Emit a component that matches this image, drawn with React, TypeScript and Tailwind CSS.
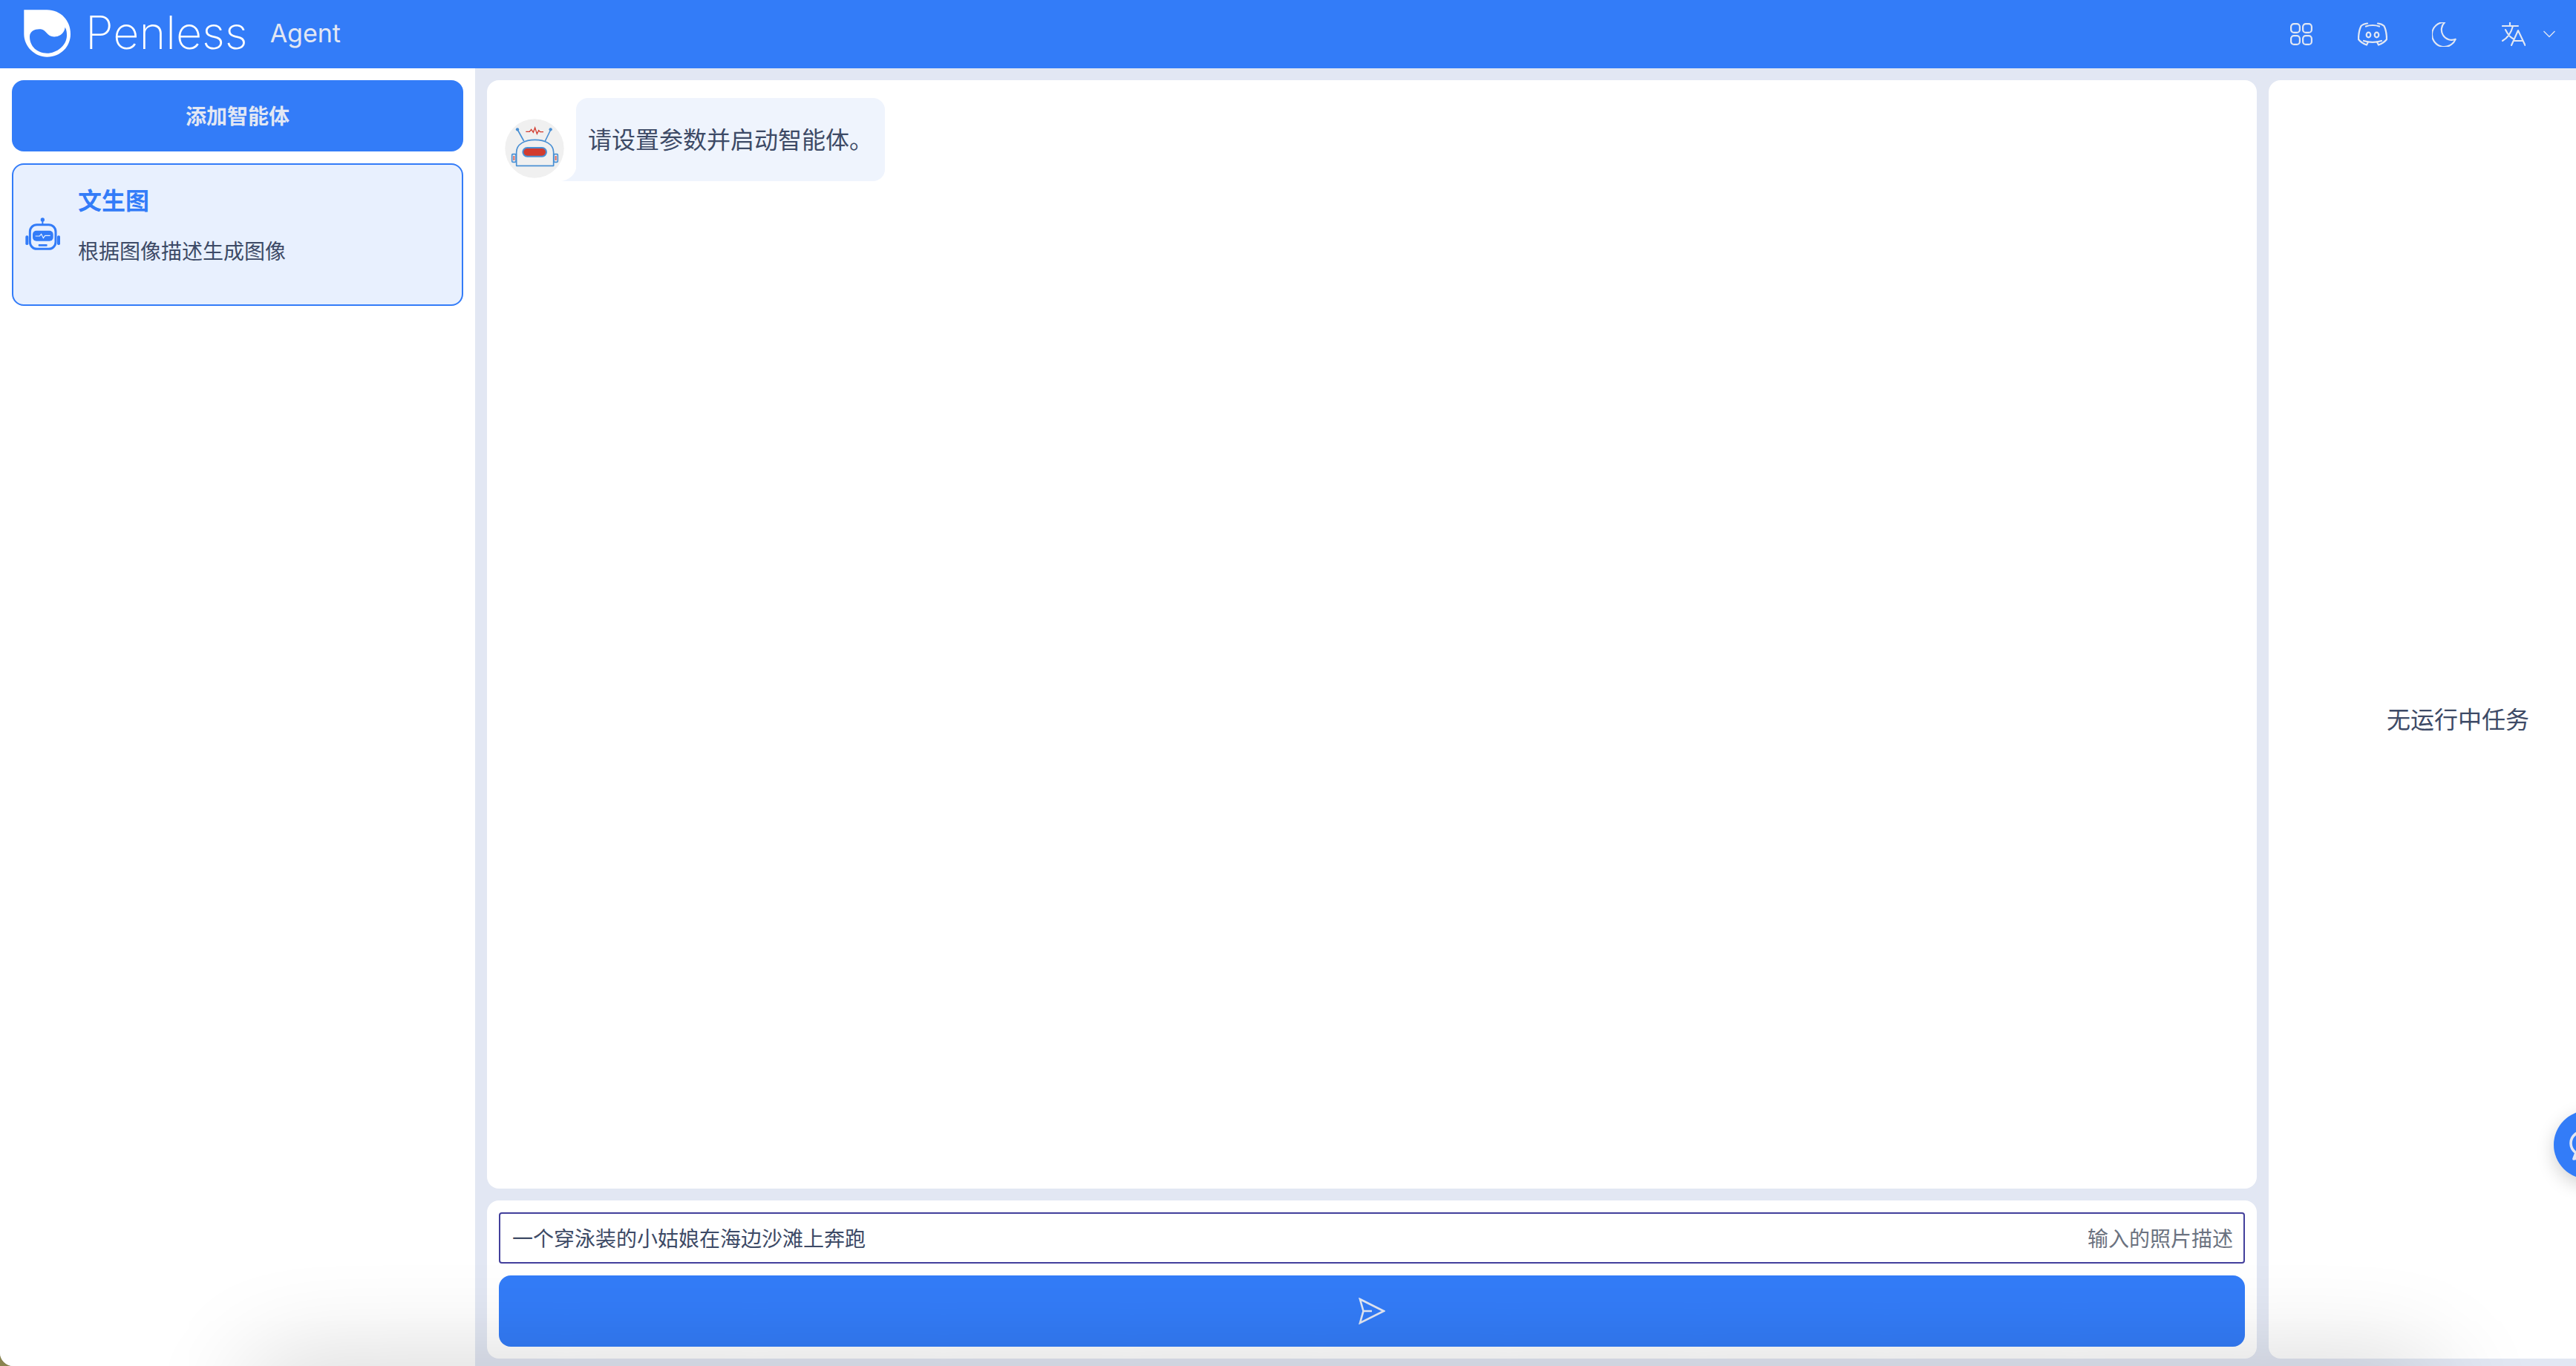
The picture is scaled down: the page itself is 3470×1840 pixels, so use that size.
export default function App() {
  const font = "[font-family:Inter,'Noto_Sans_CJK_SC',sans-serif]";
  return (
    <div className={`relative w-[3470px] h-[1840px] overflow-hidden bg-[#8a8450] ${font}`}>
      <div className="flex flex-col h-full overflow-hidden rounded-bl-[18px] bg-[#e2e7f3]">
        <header className="flex items-center h-[92px] shrink-0 bg-[#337cf8] text-[#e2e7f3]">
          <svg viewBox="0 0 240 240" className="ml-[25px] w-[80px] h-[80px] shrink-0">
            <path d="M22 22H115C170 22 210 65 210 120C210 170 170 212 115 212C65 212 22 170 22 120Z" fill="#fff" />
            <path d="M45 130C45 105 70 98 90 100C115 103 115 135 150 130C170 127 185 115 188 92C195 105 195 115 195 125C195 165 155 197 115 197C75 197 45 170 45 130Z" fill="#337cf8" />
          </svg>
          <span className="ml-[10px] mb-[3px] text-[61px] leading-none font-extralight text-white">Penless</span>
          <span className="ml-[30px] mb-[3px] text-[34px] leading-none">Agent</span>
          <div className="ml-auto mr-[28px] flex items-center">
            <svg viewBox="0 0 30 30" className="w-[30px] h-[30px]" fill="none" stroke="currentColor" strokeWidth="2.2">
              <rect x="1.1" y="1.1" width="11.8" height="11.8" rx="4" />
              <rect x="17.1" y="1.1" width="11.8" height="11.8" rx="4" />
              <rect x="1.1" y="17.1" width="11.8" height="11.8" rx="4" />
              <rect x="17.1" y="17.1" width="11.8" height="11.8" rx="4" />
            </svg>
            <svg viewBox="0 0 40 32" className="ml-[61px] w-[40px] h-[32px]" fill="none" stroke="currentColor" strokeWidth="2.2" strokeLinecap="round" strokeLinejoin="round">
              <path d="M13 1.5C9 2 6 3.5 4.5 5C2 10 1 16 1 23C4 27 8 29 12 30.5L14 26.5" />
              <path d="M27 1.5C31 2 34 3.5 35.5 5C38 10 39 16 39 23C36 27 32 29 28 30.5L26 26.5" />
              <path d="M11 5.5C16 3.5 24 3.5 29 5.5" />
              <path d="M8 25C15 27.5 25 27.5 32 25" />
              <ellipse cx="14.5" cy="17" rx="2.8" ry="3.4" />
              <ellipse cx="25.5" cy="17" rx="2.8" ry="3.4" />
            </svg>
            <svg viewBox="3 3 18 18" className="ml-[60px] w-[33px] h-[33px]" fill="none" stroke="currentColor" strokeWidth="1.15" strokeLinejoin="round">
              <path d="M12 3c.132 0 .263 0 .393 0a7.5 7.5 0 0 0 7.92 12.446a9 9 0 1 1 -8.313 -12.454z" />
            </svg>
            <svg viewBox="0 0 32 32" className="ml-[61px] w-[32px] h-[32px]" fill="none" stroke="currentColor" strokeWidth="2.1" strokeLinecap="round" strokeLinejoin="round">
              <path d="M1 5H22M11 0.5V5M15 5C13 13 8 21 1 25M5 10C8 16 11 20 15 22M13 31L22 11L31.5 31M17 25H28" />
            </svg>
            <svg viewBox="0 0 16 10" className="ml-[24px] w-[16px] h-[10px]" fill="none" stroke="currentColor" strokeWidth="1.3">
              <path d="M0.5 1L8 8.5L15.5 1" />
            </svg>
          </div>
        </header>

        <div className="flex flex-1 min-h-0 gap-4">
          <aside className="flex flex-col gap-4 w-[640px] shrink-0 p-4 bg-white">
            <button className="flex items-center justify-center h-[96px] pt-[2px] rounded-2xl bg-[#337cf8] text-[28px] font-semibold text-[#e2e7f3]">
              添加智能体
            </button>
            <div className="flex items-center h-[192px] pl-[16px] rounded-2xl border-2 border-[#337cf8] bg-[#e8f0fe]">
              <svg viewBox="0 0 195 180" className="w-[65px] h-[60px] ml-[-9px] shrink-0">
                <circle cx="97" cy="30" r="8" fill="#337cf8" />
                <path d="M97 30V48" stroke="#337cf8" strokeWidth="6" />
                <rect x="46" y="50" width="104" height="98" rx="28" fill="none" stroke="#337cf8" strokeWidth="9" />
                <rect x="57" y="74" width="83" height="42" rx="15" fill="#337cf8" />
                <path d="M68 96H85L92 88L100 104L107 94H128" fill="none" stroke="#e8f0fe" strokeWidth="3.5" />
                <rect x="80" y="129" width="36" height="8" rx="3" fill="#337cf8" />
                <rect x="28" y="94" width="12" height="38" rx="5" fill="#337cf8" />
                <rect x="156" y="94" width="12" height="38" rx="5" fill="#337cf8" />
              </svg>
              <div className="ml-[15px] flex flex-col gap-[20px] pb-[22px]">
                <span className="text-[32px] leading-[48px] font-semibold text-[#337cf8]">文生图</span>
                <span className="text-[28px] leading-[48px] text-[#3d4a66]">根据图像描述生成图像</span>
              </div>
            </div>
          </aside>

          <main className="flex flex-col gap-4 w-[2384px] shrink-0 pt-4 pb-[10px]">
            <section className="flex-1 rounded-2xl bg-white pt-[24px] pl-[25px]">
              <div className="flex items-end">
                <svg viewBox="0 0 270 270" className="relative z-10 w-[90px] h-[90px] ml-[-6px] mb-[-1px] shrink-0">
                  <circle cx="135" cy="135" r="119" fill="#f0f0f0" />
                  <g fill="none" stroke="#4a90d4" strokeWidth="5">
                    <path d="M92 105L67 60M178 105L200 60" />
                    <path d="M62 205V150C62 118 95 100 137 100C178 100 212 118 212 150V205Z" strokeLinejoin="round" />
                    <rect x="44" y="158" width="16" height="32" rx="3" />
                    <rect x="213" y="158" width="16" height="32" rx="3" />
                  </g>
                  <circle cx="66" cy="58" r="6.5" fill="#4a90d4" />
                  <circle cx="200" cy="58" r="6.5" fill="#4a90d4" />
                  <path d="M100 67H115L122 58L130 70L137 51L145 76L152 62L158 68H171" fill="none" stroke="#d23b2e" strokeWidth="4" />
                  <rect x="88" y="132" width="95" height="35" rx="17.5" fill="#d23b2e" stroke="#4a90d4" strokeWidth="6" />
                  <rect x="49" y="165" width="6" height="18" fill="#d9695e" />
                  <rect x="218" y="165" width="6" height="18" fill="#d9695e" />
                </svg>
                <div className="relative flex items-center w-[416px] h-[112px] ml-[11px] pl-[16px] pt-[2px] rounded-2xl rounded-bl-none bg-[#eff4fd] text-[32px] text-[#3d4a66]">
                  <svg viewBox="0 0 24 24" className="absolute left-[-23px] bottom-0 w-[24px] h-[24px]">
                    <path d="M24 0V24H0C14 24 24 14 24 0Z" fill="#eff4fd" />
                  </svg>
                  请设置参数并启动智能体。
                </div>
              </div>
            </section>
            <section className="flex flex-col gap-4 h-[213px] shrink-0 p-4 rounded-2xl bg-white">
              <div className="flex items-center justify-between h-[69px] pl-[16px] pr-[14px] pt-[2px] rounded-[4px] border-2 border-[#423f9b] text-[28px] leading-none">
                <span className="text-[#3d4a66]">一个穿泳装的小姑娘在海边沙滩上奔跑</span>
                <span className="text-[#6b7280]">输入的照片描述</span>
              </div>
              <button className="flex items-center justify-center h-[96px] rounded-2xl bg-[#337cf8]">
                <svg viewBox="0 0 36 36" className="w-[36px] h-[36px]" fill="none" stroke="#e2e7f3" strokeWidth="2.6" strokeLinejoin="miter">
                  <path d="M2 2L34 18L2 34L6.5 18ZM6.5 18H18" />
                </svg>
              </button>
            </section>
          </main>

          <div className="w-[510px] shrink-0 pt-4 pb-[10px]">
            <div className="flex items-center justify-center h-full pt-[2px] rounded-2xl bg-white text-[32px] text-[#3d4a66]">
              无运行中任务
            </div>
          </div>
        </div>
      </div>

      <div className="absolute left-[3440px] top-[1496px] flex items-center w-[92px] h-[92px] rounded-full bg-[#337cf8] shadow-[0_8px_24px_rgba(0,0,0,0.18)]">
        <svg viewBox="0 0 50 50" className="ml-[19px] w-[50px] h-[50px] shrink-0" fill="none" stroke="#e2e7f3" strokeWidth="3.6" strokeLinejoin="round">
          <path d="M25 6C13 6 4 13 4 23C4 29 7 33 11 36L8 44C13 43 18 41 21 40C23 40.5 24 40.5 25 40.5C37 40.5 46 33 46 23C46 13 37 6 25 6Z" />
        </svg>
      </div>

      <div className="pointer-events-none absolute left-[330px] top-[1840px] w-[2960px] h-[100px] rounded-[60px] shadow-[0_0_140px_rgba(0,0,0,0.2)]" />
    </div>
  );
}
